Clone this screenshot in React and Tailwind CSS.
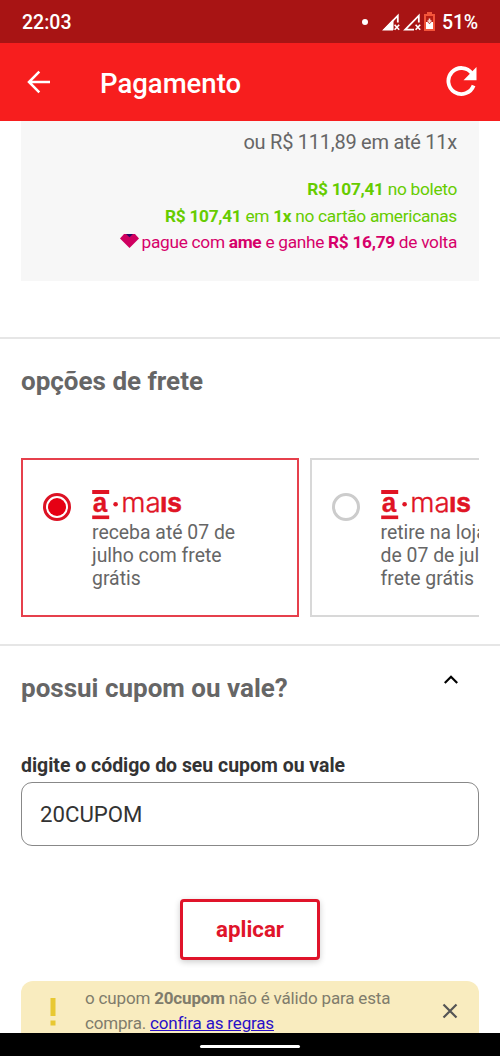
import React, { useState } from 'react';

const SHIPPING_OPTIONS = [
  { id: 'delivery', lines: ['receba até 07 de', 'julho com frete', 'grátis'] },
  { id: 'pickup', lines: ['retire na loja a partir', 'de 07 de julho com', 'frete grátis'] },
];

function SignalIcon({ filled }) {
  return (
    <svg width="18" height="18" viewBox="0 0 18 18" fill="none" className="shrink-0">
      <path d="M11 16.6 H2.2 L15.8 2.6 V9.5" stroke="#fff" strokeWidth="1.8" />
      {filled && <path d="M1 17 L11.5 6 V17 Z" fill="#fff" />}
      <path d="M12.6 11.8 L17.2 16.8 M17.2 11.8 L12.6 16.8" stroke="#fff" strokeWidth="1.6" />
    </svg>
  );
}

function BatteryIcon() {
  return (
    <svg width="11" height="19" viewBox="0 0 11 19" className="shrink-0">
      <path d="M3 0 H8 V2 H11 V19 H0 V2 H3 Z" fill="#f4553a" />
      <rect x="2" y="4" width="7" height="13" fill="#b81c14" />
      <path d="M2 10 H3.5 L5.5 12 L7.5 10 H9 V17 H2 Z" fill="#fff" />
      <path d="M5.5 6.5 V11 M3.5 9 H7.5" stroke="#ffd9cf" strokeWidth="1.6" />
    </svg>
  );
}

function StatusBar() {
  return (
    <div className="flex h-[43px] shrink-0 items-center bg-[#a81414] pl-[22px] pr-[22px] text-[19.5px] font-medium text-white">
      <div className="flex-1 pt-[2px]">22:03</div>
      <div className="mr-[14px] h-[6px] w-[6px] rounded-full bg-white" />
      <div className="mr-[3px] flex"><SignalIcon filled /></div>
      <div className="mr-[3px] flex"><SignalIcon /></div>
      <BatteryIcon />
      <div className="ml-[7px] pt-[2px] tracking-[-0.2px]">51%</div>
    </div>
  );
}

function Header() {
  return (
    <div className="flex h-[78px] shrink-0 items-center bg-[#f71e1e] pl-[27px] pr-[22px] text-white">
      <svg width="24" height="24" viewBox="0 0 24 24" fill="none" stroke="currentColor" strokeWidth="2.5">
        <path d="M23 12 H2.5 M12.3 1.7 L2 12 L12.3 22.3" />
      </svg>
      <div className="ml-[49px] flex-1 pt-[3px] text-[27.5px] font-medium">Pagamento</div>
      <svg width="32" height="32" viewBox="0 0 32 32" fill="none">
        <path d="M26 7.5 A13 13 0 1 0 27.6 19.5" stroke="currentColor" strokeWidth="3.8" />
        <path d="M30.5 1 V14.3 H17.5 Z" fill="currentColor" />
      </svg>
    </div>
  );
}

function Diamond() {
  return (
    <svg width="19" height="14" viewBox="0 0 19 14" className="mr-[3px] mb-[4px] inline-block">
      <path d="M4 0 H15 L19 4.5 L9.5 14 L0 4.5 Z" fill="#cf0060" />
      <path d="M6 0 H13 L9.5 3.2 Z" fill="#2c0a62" />
    </svg>
  );
}

function PriceSummary() {
  return (
    <div className="mx-[21px] h-[160px] shrink-0 bg-[#f7f7f7] pr-[22px] text-right">
      <div className="pt-[7px] text-[20px] leading-[28px] tracking-[-0.26px] text-[#666]">ou R$ 111,89 em até 11x</div>
      <div className="mt-[20px] text-[17.3px] leading-[26.5px] tracking-[-0.3px] text-[#6c0]">
        <div><b>R$ 107,41</b> no boleto</div>
        <div><b>R$ 107,41</b> em <b>1x</b> no cartão americanas</div>
        <div className="text-[#d6006a]">
          <Diamond />pague com <b>ame</b> e ganhe <b>R$ 16,79</b> de volta
        </div>
      </div>
    </div>
  );
}

function MaisLogo() {
  return (
    <svg width="92" height="30" viewBox="0 0 92 30" fill="#e01424" className="block overflow-visible">
      <rect x="0.2" y="0" width="17" height="4" />
      <rect x="0.2" y="25.5" width="17" height="3.6" />
      <circle cx="23.6" cy="14.3" r="2.3" />
      <g fontFamily="Liberation Sans, Arial, sans-serif" fontSize="28">
        <text x="0.8" y="21.8" fontWeight="700" textLength="14.5" lengthAdjust="spacingAndGlyphs" stroke="#e01424" strokeWidth="0.3">a</text>
        <text x="29.2" y="21.8" fontFamily="Inter, sans-serif" fontWeight="300" fontSize="27" textLength="39.5" lengthAdjust="spacingAndGlyphs" stroke="#e01424" strokeWidth="0.35">ma</text>
        <text x="68" y="21.8" fontWeight="700" textLength="22" lengthAdjust="spacingAndGlyphs" stroke="#e01424" strokeWidth="0.6">ıs</text>
      </g>
    </svg>
  );
}

function ShippingCard({ option, selected, onSelect }) {
  return (
    <div
      onClick={onSelect}
      className={`flex h-[159px] w-[278px] shrink-0 cursor-pointer border-2 pl-[20px] pt-[30px] ${selected ? 'border-[#e6404c]' : 'border-[#d8d8d8]'}`}
    >
      <div
        className={`mt-[3px] flex h-[28px] w-[28px] shrink-0 items-center justify-center rounded-full border-3 ${selected ? 'border-[#dc1224]' : 'border-[#ccc]'}`}
      >
        {selected && <div className="h-[18px] w-[18px] rounded-full bg-[#e60014]" />}
      </div>
      <div className="ml-[21px]">
        <MaisLogo />
        <div className="mt-[2px] whitespace-nowrap text-[19.4px] leading-[22.8px] text-[#666]">
          {option.lines.map(line => <div key={line}>{line}</div>)}
        </div>
      </div>
    </div>
  );
}

function ShippingSection() {
  const [selected, setSelected] = useState('delivery');

  return (
    <div className="mt-[56px] h-[307px] shrink-0 border-t-2 border-[#e6e6e6] pl-[21px] pr-[21px]">
      <div className="pt-[26px] text-[26px] leading-[32px] font-bold text-[#666]">opções de frete</div>
      <div className="mt-[61px] flex gap-[10.5px] overflow-hidden">
        {SHIPPING_OPTIONS.map(option => (
          <ShippingCard
            key={option.id}
            option={option}
            selected={selected === option.id}
            onSelect={() => setSelected(option.id)}
          />
        ))}
      </div>
    </div>
  );
}

function CouponSection() {
  const [code, setCode] = useState('20CUPOM');

  return (
    <div className="flex min-h-0 flex-1 flex-col overflow-hidden border-t-2 border-[#e6e6e6] px-[21px]">
      <div className="flex shrink-0 justify-between pt-[26px]">
        <div className="text-[26px] leading-[32px] font-bold text-[#666]">possui cupom ou vale?</div>
        <svg width="14" height="9" viewBox="0 0 14 9" fill="none" stroke="#000" strokeWidth="2.2" className="mr-[21px] mt-[3px]">
          <path d="M0.8 8 L7 1.8 L13.2 8" />
        </svg>
      </div>
      <label htmlFor="coupon" className="mt-[48px] shrink-0 text-[19.45px] leading-[28px] font-bold text-[#333]">
        digite o código do seu cupom ou vale
      </label>
      <input
        id="coupon"
        type="text"
        value={code}
        onChange={(e) => setCode(e.target.value)}
        className="mt-[2px] h-[64px] shrink-0 rounded-[11px] border border-[#888] bg-white px-[18px] text-[22.2px] text-[#333] outline-none"
      />
      <button className="mx-auto mt-[53px] h-[61px] w-[140px] shrink-0 rounded-[4px] border-3 border-[#e0142a] bg-white text-[22.3px] font-bold text-[#e0142a] shadow-[0_2px_6px_rgba(0,0,0,0.2)]">
        aplicar
      </button>
      <div className="mt-[21px] flex h-[76px] shrink-0 rounded-[12px] bg-[#f9ecbf] pl-[29px] pt-[5px]">
        <svg width="6" height="28" viewBox="0 0 6 28" fill="#e8c832" className="mt-[12px] shrink-0">
          <rect x="0.5" width="5" height="18" />
          <rect x="0.5" y="22.5" width="5" height="5" />
        </svg>
        <div className="ml-[29px] flex-1 whitespace-nowrap text-[17px] leading-[25px] tracking-[-0.17px] text-[#807c6c]">
          <div>o cupom <b>20cupom</b> não é válido para esta</div>
          <div>compra. <a href="#" className="text-[#2a10c8] underline">confira as regras</a></div>
        </div>
        <svg width="16" height="16" viewBox="0 0 16 16" stroke="#555" strokeWidth="2.2" className="mr-[21px] mt-[17px] shrink-0">
          <path d="M1.5 1.5 L14.5 14.5 M14.5 1.5 L1.5 14.5" />
        </svg>
      </div>
    </div>
  );
}

export default function App() {
  return (
    <div className="flex h-[1056px] w-[500px] flex-col overflow-hidden bg-white font-[Roboto,sans-serif]">
      <StatusBar />
      <Header />
      <PriceSummary />
      <ShippingSection />
      <CouponSection />
      <div className="flex h-[23px] shrink-0 justify-center bg-black pt-[12px]">
        <div className="h-[3px] w-[100px] rounded-full bg-white" />
      </div>
    </div>
  );
}
